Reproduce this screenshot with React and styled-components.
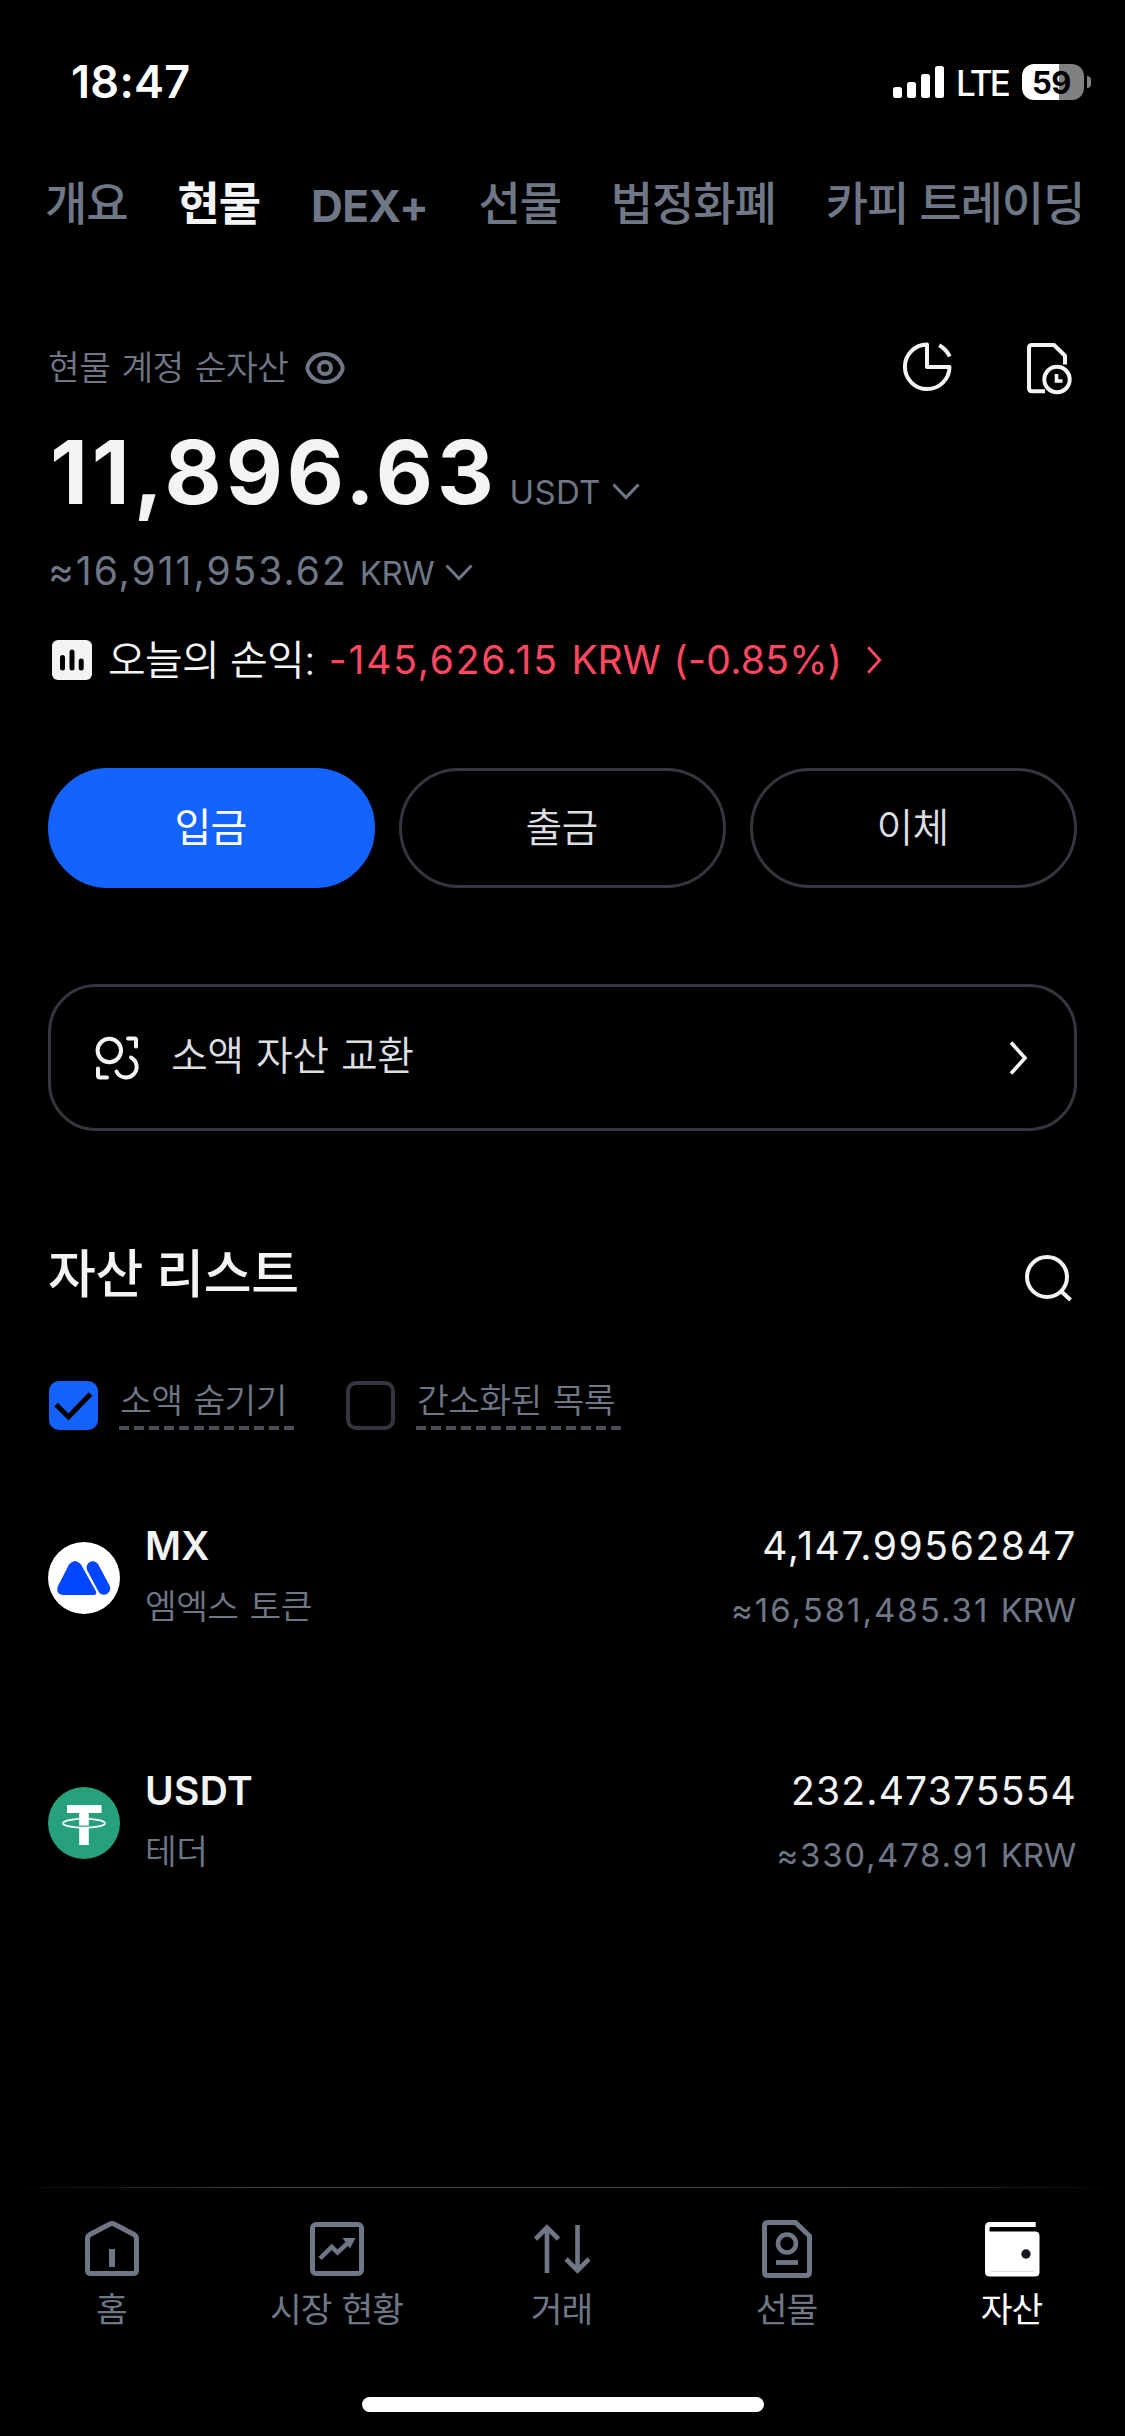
import styled, { createGlobalStyle } from "styled-components";

const GlobalStyle = createGlobalStyle`
  * {
    box-sizing: border-box;
  }

  body {
    margin: 0;
    background: #000;
    font-family: Inter, "Noto Sans CJK KR", sans-serif;
  }

  svg {
    display: block;
    flex: none;
  }
`;

const Screen = styled.div`
  display: flex;
  flex-direction: column;
  width: 1125px;
  height: 2436px;
  background: #000;
  color: #f3f4f6;
  overflow: hidden;
`;

const StatusBar = styled.header`
  display: flex;
  align-items: center;
  justify-content: space-between;
  height: 164px;
  padding: 0 34px 0 71px;
  color: #fff;
`;

const Clock = styled.span`
  font-size: 45px;
  font-weight: 600;
  line-height: 54px;
  letter-spacing: 0.3px;
`;

const Signals = styled.div`
  display: flex;
  align-items: center;
`;

const Network = styled.span`
  margin-left: 12px;
  font-size: 35px;
  font-weight: 500;
  line-height: 40px;
  letter-spacing: -2.8px;
  padding-top: 2px;
`;

const Battery = styled.div`
  display: flex;
  align-items: center;
  justify-content: center;
  width: 62px;
  height: 36px;
  margin-left: 14px;
  padding-right: 3px;
  border-radius: 12px;
  background: linear-gradient(to right, #fff 60%, #808080 60%);
  color: #000;
  font-size: 31px;
  font-weight: 700;
  letter-spacing: -0.5px;
`;

const BatteryTip = styled.div`
  width: 4px;
  height: 12px;
  margin-left: 3px;
  border-radius: 0 4px 4px 0;
  background: #808080;
`;

const Tabs = styled.nav`
  display: flex;
  align-items: center;
  gap: 50px;
  height: 80px;
  padding-left: 45px;
  white-space: nowrap;
`;

const Tab = styled.span`
  padding: ${(p) => (p.$latin ? "3px 0 0 1px" : "0 0 2px")};
  color: ${(p) => (p.$active ? "#f3f4f6" : "#6f7786")};
  font-size: ${(p) => (p.$latin ? 44 : 46)}px;
  font-weight: ${(p) => (p.$active || p.$latin ? 700 : 500)};
  line-height: 60px;
  letter-spacing: ${(p) => (p.$latin ? "-0.4px" : "-1.1px")};
`;

const Hero = styled.section`
  display: flex;
  flex-direction: column;
  height: 524px;
  padding: 96px 48px 0;
`;

const LabelRow = styled.div`
  display: flex;
  align-items: center;
  height: 56px;
`;

const Label = styled.span`
  color: #6f7786;
  font-size: 34.5px;
  font-weight: 350;
  line-height: 44px;
  letter-spacing: -0.6px;
  word-spacing: 2px;
  margin: 0 17px 0 0;
`;

const HeroIcons = styled.div`
  display: flex;
  gap: 67px;
  margin: 0 5px 0 auto;
`;

const AmountRow = styled.div`
  display: flex;
  align-items: baseline;
  height: 104px;
  margin-top: 26px;
  padding-left: 2px;
  line-height: 100px;
`;

const Amount = styled.strong`
  font-size: 88px;
  font-weight: 700;
  letter-spacing: 3.9px;
`;

const ApproxRow = styled.div`
  display: flex;
  align-items: baseline;
  height: 50px;
  margin-top: 20px;
  line-height: 50px;
  color: #6f7786;
`;

const Approx = styled.span`
  font-size: 39px;
  letter-spacing: 2px;
`;

const Unit = styled.span`
  margin: 0 11px 0 ${(p) => p.$left}px;
  color: #6f7786;
  font-size: 33px;
  letter-spacing: ${(p) => p.$tracking}px;
`;

const PnlRow = styled.div`
  display: flex;
  align-items: center;
  height: 50px;
  margin-top: 39px;
  padding-left: 4px;
`;

const PnlLabel = styled.span`
  margin-left: 16px;
  font-size: 41px;
  font-weight: 350;
  line-height: 50px;
  letter-spacing: -0.7px;
`;

const PnlValue = styled.span`
  margin: 0 24px 0 14px;
  color: #ff4761;
  font-size: 39px;
  line-height: 50px;
  letter-spacing: 1.8px;
`;

const Currency = styled.span`
  letter-spacing: -0.2px;
`;

const Percent = styled.span`
  letter-spacing: 0.3px;
`;

const Actions = styled.div`
  display: grid;
  grid-template-columns: repeat(3, 1fr);
  gap: 24px;
  padding: 0 48px;
`;

const ActionButton = styled.button`
  height: 120px;
  padding: 0 2px 6px 0;
  border: 3px solid ${(p) => (p.$primary ? "#1463ff" : "#33363d")};
  border-radius: 60px;
  background: ${(p) => (p.$primary ? "#1463ff" : "transparent")};
  color: ${(p) => (p.$primary ? "#fff" : "#dcdee2")};
  font-family: inherit;
  font-size: 40px;
  font-weight: ${(p) => (p.$primary ? 400 : 350)};
  letter-spacing: -0.8px;
`;

const ConvertCard = styled.div`
  display: flex;
  align-items: center;
  height: 147px;
  margin: 96px 48px 0;
  padding: 0 46px 0 42px;
  border: 3px solid #33363d;
  border-radius: 48px;
`;

const ConvertLabel = styled.span`
  flex: 1;
  margin-left: 28px;
  padding-bottom: 4px;
  color: #dcdee2;
  font-size: 40px;
  font-weight: 350;
  line-height: 48px;
  letter-spacing: -0.6px;
  word-spacing: 2px;
`;

const ListHeader = styled.div`
  display: flex;
  align-items: center;
  justify-content: space-between;
  height: 60px;
  margin-top: 115px;
  padding: 0 50px 0 48px;

  svg {
    margin-top: 3px;
  }
`;

const ListTitle = styled.h2`
  margin: 0;
  padding-bottom: 3px;
  font-size: 52px;
  font-weight: 500;
  line-height: 60px;
  letter-spacing: -0.4px;
`;

const Filters = styled.div`
  display: flex;
  align-items: flex-start;
  margin-top: 75px;
  padding-left: 49px;
  height: 49px;
`;

const Checkbox = styled.span`
  display: flex;
  align-items: center;
  justify-content: center;
  width: 49px;
  height: 49px;
  border: 4px solid ${(p) => (p.$checked ? "#1463ff" : "#33363d")};
  border-radius: 10px;
  background: ${(p) => (p.$checked ? "#1463ff" : "transparent")};
`;

const FilterLabel = styled.span`
  height: 49px;
  width: ${(p) => p.$width}px;
  margin: 0 51px 0 21px;
  padding-left: 1px;
  background: repeating-linear-gradient(to right, #4a4e59 0 10px, transparent 10px 15px) 0 100% / 100% 4px no-repeat;
  color: #6f7786;
  font-size: 34.5px;
  font-weight: 350;
  line-height: 40px;
  letter-spacing: -0.6px;
  word-spacing: 2px;
  white-space: nowrap;
`;

const AssetList = styled.ul`
  display: flex;
  flex-direction: column;
  margin: 79px 0 0;
  padding: 0 48px;
  list-style: none;
`;

const AssetRow = styled.li`
  display: flex;
  height: 245px;
`;

const Avatar = styled.div`
  margin: 33px 25px 0 0;
`;

const AssetText = styled.div`
  display: flex;
  flex-direction: column;
  margin-left: ${(p) => (p.$right ? "auto" : "0")};
  align-items: ${(p) => (p.$right ? "flex-end" : "flex-start")};
`;

const Primary = styled.span`
  margin-top: 13px;
  font-size: 39px;
  font-weight: ${(p) => (p.$bold ? 600 : 400)};
  line-height: 48px;
  letter-spacing: ${(p) => p.$tracking ?? 0.3}px;
`;

const Secondary = styled.span`
  margin: ${(p) => (p.$latin ? "18px 1px 0 0" : "15px 0 0")};
  color: #6f7786;
  font-size: ${(p) => (p.$latin ? 33 : 34.5)}px;
  font-weight: ${(p) => (p.$latin ? 400 : 350)};
  line-height: 44px;
  letter-spacing: ${(p) => p.$tracking ?? -0.6}px;
  word-spacing: ${(p) => (p.$latin ? 0 : 2)}px;
`;

const BottomBar = styled.footer`
  margin-top: auto;
  height: 249px;
`;

const Divider = styled.div`
  height: 1px;
  background: linear-gradient(to right, transparent, #444 25%, #444 75%, transparent);
`;

const NavItems = styled.nav`
  display: grid;
  grid-template-columns: repeat(5, 225px);
  height: 209px;
  margin-left: -1px;
`;

const NavItem = styled.div`
  display: flex;
  flex-direction: column;
  align-items: center;
  padding-top: 31px;
  color: ${(p) => (p.$active ? "#fff" : "#6f7786")};
  font-size: 34.5px;
  line-height: 44px;
  letter-spacing: -0.9px;
  word-spacing: 1px;

  span {
    margin-top: 9px;
  }
`;

const HomeIndicator = styled.div`
  width: 402px;
  height: 15px;
  margin: 0 auto;
  border-radius: 8px;
  background: #fff;
`;

const SignalIcon = () => (
  <svg width="51" height="32" viewBox="0 0 51 32" fill="#fff">
    <rect x="0" y="21" width="9" height="11" rx="2.5" />
    <rect x="14" y="16" width="9" height="16" rx="2.5" />
    <rect x="28" y="8" width="9" height="24" rx="2.5" />
    <rect x="42" y="0" width="9" height="32" rx="2.5" />
  </svg>
);

const EyeIcon = () => (
  <svg width="40" height="32" viewBox="0 0 40 32" fill="none" stroke="#6f7786" strokeWidth="4">
    <path d="M3 13C6.500 5.500 12.500 2 20 2S33.500 5.500 37 13Q38.200 16 37 19C33.500 26.500 27.500 30 20 30S6.500 26.500 3 19Q1.800 16 3 13Z" />
    <circle cx="20" cy="16" r="6" />
  </svg>
);

const PieIcon = () => (
  <svg width="52" height="52" viewBox="0 0 52 52" fill="none" stroke="#f3f4f6" strokeWidth="4" strokeLinejoin="round">
    <path d="M26 4.500V27H48.500A22.300 22.300 0 1 1 26 4.500Z" />
    <path d="M38.200 5.300Q45.300 9.300 48.700 16.500" />
  </svg>
);

const RecordIcon = () => (
  <svg width="52" height="56" viewBox="0 0 52 56" fill="none" stroke="#f3f4f6" strokeWidth="4" strokeLinejoin="round">
    <path d="M25 51.300H12Q9 51.300 9 48.300V8Q9 5 12 5H34L45 15.800V24.500" />
    <circle cx="37" cy="39.500" r="12.700" />
    <path d="M36.500 34V41H42.500" strokeWidth="3.600" strokeLinejoin="miter" />
  </svg>
);

const ChevronDown = () => (
  <svg width="28" height="21" viewBox="0 0 28 21" fill="none" stroke="#6f7786" strokeWidth="3">
    <path d="M1.500 1.500L14 14.500L26.500 1.500" />
  </svg>
);

const ChevronRight = ({ width, height, color, stroke }) => (
  <svg width={width} height={height} viewBox="0 0 18 34" fill="none" stroke={color} strokeWidth={stroke}>
    <path d="M2 1.500L16 17L2 32.500" />
  </svg>
);

const PnlIcon = () => (
  <svg width="40" height="40" viewBox="0 0 40 40">
    <rect width="40" height="40" rx="6" fill="#f3f4f6" />
    <path d="M10.500 17.500V28M20 12V28M29.200 21V28" stroke="#000" strokeWidth="5" strokeLinecap="round" />
  </svg>
);

const ConvertIcon = () => (
  <svg width="50" height="50" viewBox="0 0 50 50" fill="none" stroke="#f3f4f6" strokeWidth="4" strokeLinecap="round" strokeLinejoin="round">
    <circle cx="16.300" cy="17.500" r="11.700" />
    <path d="M35 5.500H41.500Q43 5.500 43 7V13.500M5 35.500V42.500Q5 44.500 7 44.500H14" />
    <path d="M38 24.500A10.600 10.600 0 1 1 23.500 38.500" />
  </svg>
);

const SearchIcon = () => (
  <svg width="50" height="50" viewBox="0 0 50 50" fill="none" stroke="#f3f4f6" strokeWidth="4">
    <circle cx="22" cy="24" r="20" />
    <path d="M36 38L45.500 47" />
  </svg>
);

const CheckIcon = () => (
  <svg width="41" height="41" viewBox="0 0 41 41" fill="none" stroke="#000" strokeWidth="5">
    <path d="M3 19.500L15.500 32L37.500 9" />
  </svg>
);

const MxLogo = () => (
  <svg width="72" height="72" viewBox="0 0 72 72">
    <circle cx="36" cy="36" r="36" fill="#fff" />
    <path d="M21 22.500Q27 15.500 33 22.500L48 49.500Q49 53 45.500 53H14.500Q7 51.500 10 44Z" fill="#0046ff" />
    <path d="M44.800 25.500L56 46.500" stroke="#0046ff" strokeWidth="12.500" strokeLinecap="round" />
  </svg>
);

const TetherLogo = () => (
  <svg width="72" height="72" viewBox="0 0 72 72">
    <circle cx="36" cy="36" r="36" fill="#26a17b" />
    <ellipse cx="36" cy="36.300" rx="21" ry="4.400" fill="none" stroke="#fff" strokeWidth="1.800" />
    <path d="M19 18H53.500V26H40.800V38.500H31.200V26H19Z" fill="#fff" />
    <path d="M31.200 41H40.800V58H31.200Z" fill="#fff" />
  </svg>
);

const NavSvg = (props) => (
  <svg width="60" height="60" viewBox="0 0 60 60" fill="none" stroke="currentColor" strokeWidth="5" {...props} />
);

const HomeIcon = () => (
  <NavSvg>
    <path d="M5.500 19.500Q5.500 17 8 15.500L28 5Q30 4 32 5L52 15.500Q54.500 17 54.500 19.500V51Q54.500 54.500 51 54.500H9Q5.500 54.500 5.500 51Z" />
    <path d="M30 30V48" strokeWidth="6" />
  </NavSvg>
);

const MarketIcon = () => (
  <NavSvg>
    <rect x="5.500" y="5.500" width="49" height="49" rx="3.500" />
    <path d="M13 39.500L24.800 28L30.500 33.500L43 22" strokeWidth="4.500" />
    <path d="M35.500 19H48.500L43 29.500Z" fill="currentColor" stroke="none" />
  </NavSvg>
);

const TradeIcon = () => (
  <NavSvg>
    <path d="M15 54V9M3.500 20L15 8.500L26.500 20M45.500 6V51M34 40L45.500 51.500L57 40" strokeWidth="4.600" />
  </NavSvg>
);

const FuturesIcon = () => (
  <NavSvg>
    <path d="M7.500 7Q7.500 3.500 11 3.500H38.500L52.500 17V53Q52.500 56.500 49 56.500H11Q7.500 56.500 7.500 53Z" />
    <circle cx="30" cy="24.500" r="9" strokeWidth="4.600" />
    <path d="M19 43.500H41" strokeWidth="4.800" />
  </NavSvg>
);

const WalletIcon = () => (
  <NavSvg stroke="none" fill="currentColor">
    <path d="M3 8Q3 3 8 3H53.700V8H8.500Q7.500 8 7.500 9V12.500H53Q57.500 12.500 57.500 17V53Q57.500 57.500 53 57.500H8Q3 57.500 3 53Z" />
    <path d="M8.500 52.300H52" stroke="#d9d9dc" strokeWidth="1" />
    <circle cx="44" cy="35" r="4.700" fill="#16181f" />
  </NavSvg>
);

const tabs = ["개요", "현물", "DEX+", "선물", "법정화폐", "카피 트레이딩"];

const assets = [
  {
    symbol: "MX",
    name: "엠엑스 토큰",
    amount: "4,147.99562847",
    value: "≈16,581,485.31",
    tracking: [1.6, 2],
    Logo: MxLogo,
  },
  {
    symbol: "USDT",
    name: "테더",
    amount: "232.47375554",
    value: "≈330,478.91",
    tracking: [1.2, 1.7],
    Logo: TetherLogo,
  },
];

const navItems = [
  { label: "홈", Icon: HomeIcon },
  { label: "시장 현황", Icon: MarketIcon },
  { label: "거래", Icon: TradeIcon },
  { label: "선물", Icon: FuturesIcon },
  { label: "자산", Icon: WalletIcon },
];

export default function App() {
  return (
    <Screen>
      <GlobalStyle />
      <StatusBar>
        <Clock>18:47</Clock>
        <Signals>
          <SignalIcon />
          <Network>LTE</Network>
          <Battery>59</Battery>
          <BatteryTip />
        </Signals>
      </StatusBar>

      <Tabs>
        {tabs.map((tab) => (
          <Tab key={tab} $active={tab === "현물"} $latin={tab === "DEX+"}>
            {tab}
          </Tab>
        ))}
      </Tabs>

      <Hero>
        <LabelRow>
          <Label>현물 계정 순자산</Label>
          <EyeIcon />
          <HeroIcons>
            <PieIcon />
            <RecordIcon />
          </HeroIcons>
        </LabelRow>
        <AmountRow>
          <Amount>11,896.63</Amount>
          <Unit $left={12} $tracking={0.3}>USDT</Unit>
          <ChevronDown />
        </AmountRow>
        <ApproxRow>
          <Approx>≈16,911,953.62</Approx>
          <Unit $left={12} $tracking={-0.4}>KRW</Unit>
          <ChevronDown />
        </ApproxRow>
        <PnlRow>
          <PnlIcon />
          <PnlLabel>오늘의 손익:</PnlLabel>
          <PnlValue>
            -145,626.15 <Currency>KRW</Currency> <Percent>(-0.85%)</Percent>
          </PnlValue>
          <ChevronRight width={16} height={28} color="#ff4761" stroke={3.4} />
        </PnlRow>
      </Hero>

      <Actions>
        <ActionButton $primary>입금</ActionButton>
        <ActionButton>출금</ActionButton>
        <ActionButton>이체</ActionButton>
      </Actions>

      <ConvertCard>
        <ConvertIcon />
        <ConvertLabel>소액 자산 교환</ConvertLabel>
        <ChevronRight width={20} height={34} color="#f3f4f6" stroke={3.6} />
      </ConvertCard>

      <ListHeader>
        <ListTitle>자산 리스트</ListTitle>
        <SearchIcon />
      </ListHeader>

      <Filters>
        <Checkbox $checked>
          <CheckIcon />
        </Checkbox>
        <FilterLabel $width={176}>소액 숨기기</FilterLabel>
        <Checkbox />
        <FilterLabel $width={206}>간소화된 목록</FilterLabel>
      </Filters>

      <AssetList>
        {assets.map(({ symbol, name, amount, value, tracking, Logo }) => (
          <AssetRow key={symbol}>
            <Avatar>
              <Logo />
            </Avatar>
            <AssetText>
              <Primary $bold>{symbol}</Primary>
              <Secondary>{name}</Secondary>
            </AssetText>
            <AssetText $right>
              <Primary $tracking={tracking[0]}>{amount}</Primary>
              <Secondary $latin $tracking={tracking[1]}>
                {value} <Currency>KRW</Currency>
              </Secondary>
            </AssetText>
          </AssetRow>
        ))}
      </AssetList>

      <BottomBar>
        <Divider />
        <NavItems>
          {navItems.map(({ label, Icon }) => (
            <NavItem key={label} $active={label === "자산"}>
              <Icon />
              <span>{label}</span>
            </NavItem>
          ))}
        </NavItems>
        <HomeIndicator />
      </BottomBar>
    </Screen>
  );
}
